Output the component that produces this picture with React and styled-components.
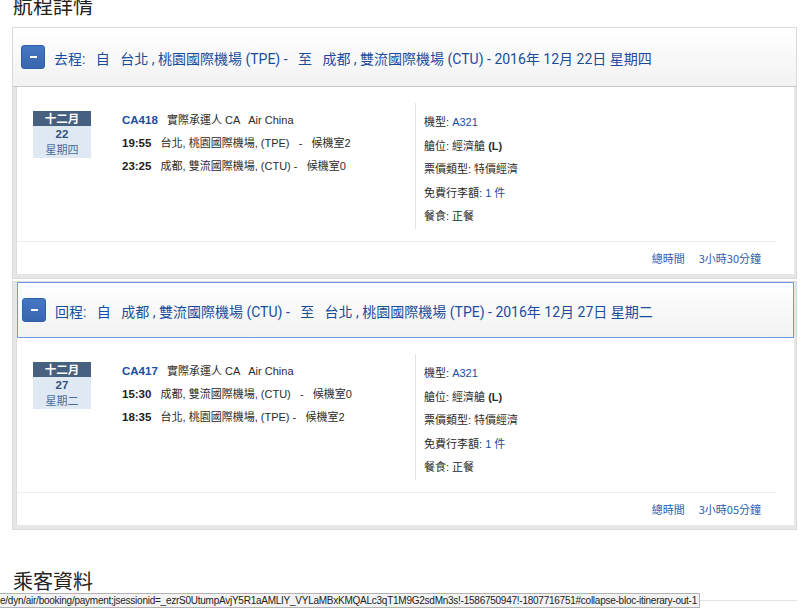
import React from "react";
import styled, { createGlobalStyle } from "styled-components";

const GlobalStyle = createGlobalStyle`
  html, body {
    margin: 0;
    padding: 0;
    background: #fff;
    overflow: hidden;
  }
  body {
    font-family: "Liberation Sans", "Noto Sans CJK TC", sans-serif;
    color: #333;
  }
`;

const Page = styled.div`
  padding: 0 3px 0 12px;
`;

const SectionTitle = styled.h2`
  margin: ${(p) => (p.$first ? "-7px 0 8px 1px" : "38px 0 6px 1px")};
  font-family: "Noto Sans CJK TC", sans-serif;
  font-weight: 400;
  font-size: 20px;
  line-height: 26px;
  color: #222;
`;

const Panel = styled.section`
  border: 1px solid #dadada;
  background: #e7e7e7;
  margin-bottom: 2px;
`;

const Header = styled.div`
  display: flex;
  align-items: center;
  gap: 9px;
  background: linear-gradient(#ffffff, #f2f2f2);
  ${(p) =>
    p.$focused
      ? `
    height: 54px;
    margin: 0 2px 0 4px;
    padding-left: 4px;
    border: 1px solid #6f9ae0;
  `
      : `
    height: 58px;
    padding-left: 8px;
    border-bottom: 1px solid #c8c8c8;
  `}
`;

const ToggleButton = styled.button`
  width: 24px;
  height: 24px;
  padding: 0;
  border: 1px solid #2f5fa6;
  border-radius: 3px;
  background: linear-gradient(#4677c2, #3866ae);
  display: flex;
  align-items: center;
  justify-content: center;

  span {
    display: block;
    width: 7px;
    height: 2px;
    background: #fff;
  }
`;

const HeaderText = styled.div`
  font-family: "Roboto", "Noto Sans CJK TC", sans-serif;
  font-size: 14px;
  color: #1a4c9c;
  white-space: pre;
  padding-top: 2px;
`;

const Body = styled.div`
  background: #fff;
  margin: 0 2px 4px 3px;
  border-left: 1px solid #dcdcdc;
`;

const Segment = styled.div`
  display: grid;
  grid-template-columns: 58px 324px 1fr;
  padding: 16px 0 0 16px;
`;

const DateBox = styled.div`
  margin-top: 8px;
  width: 58px;
  align-self: start;
  background: #dfe9f4;
  text-align: center;
  font-family: "Noto Sans CJK TC", sans-serif;
`;

const DateMonth = styled.div`
  height: 15px;
  line-height: 15px;
  background: #46607f;
  color: #fff;
  font-size: 11.5px;
  font-weight: 700;
`;

const DateDay = styled.div`
  height: 16px;
  line-height: 17px;
  font-family: "Liberation Sans", sans-serif;
  font-weight: 700;
  font-size: 11.5px;
  color: #34507a;
`;

const DateWeek = styled.div`
  height: 16px;
  line-height: 15px;
  font-size: 11px;
  color: #4b6d97;
`;

const FlightCol = styled.div`
  padding: 5px 0 0 31px;
`;

const FlightLine = styled.div`
  font-size: 11px;
  line-height: ${(p) => (p.$tall ? "24px" : "23px")};
  white-space: pre;
  color: #2b2b2b;
`;

const FlightNo = styled.b`
  color: #1a4ea0;
  font-size: 11.5px;
`;

const Time = styled.b`
  color: #222;
  font-size: 11.5px;
`;

const DetailCol = styled.div`
  border-left: 1px solid #e3e3e3;
  padding: 8px 0 0 8px;
  height: 126px;
  box-sizing: border-box;
`;

const DetailLine = styled.div`
  font-size: 11px;
  line-height: 23.5px;
  color: #2b2b2b;
  white-space: pre;

  b {
    font-weight: 700;
  }
`;

const Blue = styled.span`
  color: #1a4ea0;
`;

const Rule = styled.hr`
  border: none;
  height: 1px;
  background: #ececec;
  margin: 12px 18px 0 0;
`;

const Footer = styled.div`
  display: flex;
  justify-content: flex-end;
  gap: 14px;
  height: 32px;
  line-height: 32px;
  padding-right: 33px;
  font-family: "Noto Sans CJK TC", sans-serif;
  font-size: 11px;
  color: #2a5db0;
`;

const NextPanel = styled.div`
  border-top: 1px solid #e2e2e2;
  height: 40px;
`;

const StatusBar = styled.div`
  position: fixed;
  left: 0;
  bottom: 1px;
  height: 13px;
  line-height: 13px;
  padding: 0 2px 0 0;
  border: 1px solid #b3b3b3;
  border-left: none;
  background: #f3f3f3;
  font-family: "Liberation Sans", sans-serif;
  font-size: 10px;
  letter-spacing: -0.25px;
  color: #222;
  white-space: nowrap;
`;

const trips = [
  {
    label: "去程",
    from: "台北 , 桃園國際機場 (TPE)",
    to: "成都 , 雙流國際機場 (CTU)",
    date: "2016年 12月 22日 星期四",
    day: "22",
    week: "星期四",
    flight: "CA418",
    dep: ["19:55", "台北, 桃園國際機場, (TPE)   -   候機室2"],
    arr: ["23:25", "成都, 雙流國際機場, (CTU) -   候機室0"],
    total: "3小時30分鐘",
  },
  {
    label: "回程",
    from: "成都 , 雙流國際機場 (CTU)",
    to: "台北 , 桃園國際機場 (TPE)",
    date: "2016年 12月 27日 星期二",
    day: "27",
    week: "星期二",
    flight: "CA417",
    dep: ["15:30", "成都, 雙流國際機場, (CTU)   -   候機室0"],
    arr: ["18:35", "台北, 桃園國際機場, (TPE) -   候機室2"],
    total: "3小時05分鐘",
    focused: true,
  },
];

function Trip({ trip }) {
  return (
    <Panel>
      <Header $focused={trip.focused}>
        <ToggleButton aria-label="collapse">
          <span />
        </ToggleButton>
        <HeaderText>
          {`${trip.label}:   自   ${trip.from} -   至   ${trip.to} - ${trip.date}`}
        </HeaderText>
      </Header>
      <Body>
        <Segment>
          <DateBox>
            <DateMonth>十二月</DateMonth>
            <DateDay>{trip.day}</DateDay>
            <DateWeek>{trip.week}</DateWeek>
          </DateBox>
          <FlightCol>
            <FlightLine $tall>
              <FlightNo>{trip.flight}</FlightNo>
              {"   實際承運人 CA   Air China"}
            </FlightLine>
            <FlightLine>
              <Time>{trip.dep[0]}</Time>
              {"   " + trip.dep[1]}
            </FlightLine>
            <FlightLine>
              <Time>{trip.arr[0]}</Time>
              {"   " + trip.arr[1]}
            </FlightLine>
          </FlightCol>
          <DetailCol>
            <DetailLine>
              機型: <Blue>A321</Blue>
            </DetailLine>
            <DetailLine>
              艙位: 經濟艙 <b>(L)</b>
            </DetailLine>
            <DetailLine>票價類型: 特價經濟</DetailLine>
            <DetailLine>
              免費行李額: <Blue>1 件</Blue>
            </DetailLine>
            <DetailLine>餐食: 正餐</DetailLine>
          </DetailCol>
        </Segment>
        <Rule />
        <Footer>
          <span>總時間</span>
          <span>{trip.total}</span>
        </Footer>
      </Body>
    </Panel>
  );
}

export default function App() {
  return (
    <>
      <GlobalStyle />
      <Page>
        <SectionTitle $first>航程詳情</SectionTitle>
        {trips.map((t) => (
          <Trip key={t.label} trip={t} />
        ))}
        <SectionTitle>乘客資料</SectionTitle>
        <NextPanel />
      </Page>
      <StatusBar>
        e/dyn/air/booking/payment;jsessionid=_ezrS0UtumpAvjY5R1aAMLIY_VYLaMBxKMQALc3qT1M9G2sdMn3s!-1586750947!-1807716751#collapse-bloc-itinerary-out-1
      </StatusBar>
    </>
  );
}
